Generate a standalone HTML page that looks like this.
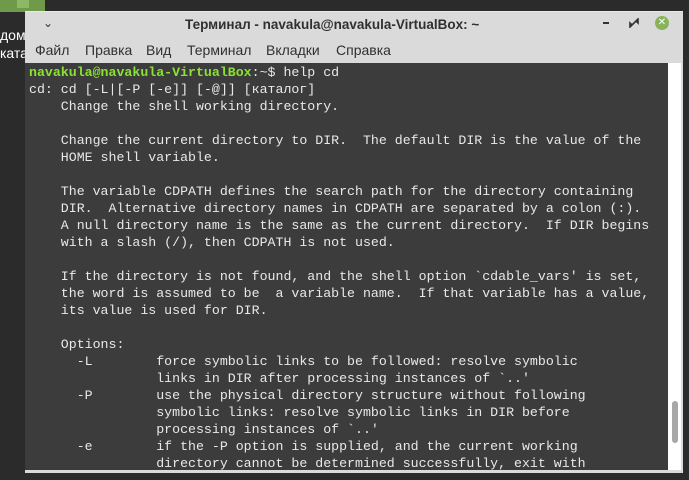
<!DOCTYPE html>
<html><head><meta charset="utf-8"><style>
html,body{margin:0;padding:0;}
body{width:689px;height:480px;overflow:hidden;background:#2b2b2b;position:relative;font-family:"Liberation Sans","DejaVu Sans",sans-serif;}
.icon{position:absolute;left:0;top:0;width:45px;height:12px;background:#6f9a4a;}
.icon2{position:absolute;left:17px;top:0;width:12px;height:8px;background:#8db866;}
.dl{position:absolute;left:0;color:#fff;font-size:14px;}
.win{position:absolute;left:25px;top:11px;width:658px;height:461px;background:#dadada;border-top:1px solid #e8e8e8;}
.title{position:absolute;top:0;left:160px;height:26px;white-space:nowrap;font-size:13.5px;line-height:26px;color:#303030;font-weight:bold;}
.menu{position:absolute;top:26px;left:0;height:24px;font-size:14px;line-height:24px;color:#303030;}
.menu span{position:absolute;top:0;white-space:nowrap;}
.term{position:absolute;top:51px;left:0;width:643px;height:407px;background:#3c3c3c;overflow:hidden;}
.sb{position:absolute;top:51px;left:643px;width:13px;height:407px;background:#fff;}
.thumb{position:absolute;left:4px;top:338px;width:6px;height:42px;border-radius:3px;background:#a8a8a8;}
pre{margin:0;padding:1px 0 0 4px;font-family:"Liberation Mono","DejaVu Sans Mono",monospace;font-size:13.25px;line-height:17px;color:#e8e8e8;}
.g{color:#8ae234;font-weight:bold;}
</style></head><body>
<div class="icon"></div><div class="icon2"></div>
<div class="dl" style="top:27px">дома</div>
<div class="dl" style="top:45px">ката</div>
<div class="win">
<div style="position:absolute;left:18px;top:4px;font-size:12px;color:#333">&#8964;</div>
<div class="title">Терминал - navakula@navakula-VirtualBox: ~</div>
<div style="position:absolute;left:578px;top:10px;width:6px;height:2px;background:#333"></div>
<svg style="position:absolute;left:604px;top:6px" width="10" height="10" viewBox="0 0 10 10"><path d="M1 9 L1 5 L3 7 Z M9 1 L9 5 L7 3 Z M2 8 L8 2" stroke="#333" stroke-width="1.6" fill="#333"/></svg>
<div style="position:absolute;left:630px;top:4px;width:14px;height:14px;border-radius:50%;background:#87b45a;color:#fff;font-size:10px;line-height:14px;text-align:center;font-weight:bold;">✕</div>
<div class="menu"><span style="left:10px">Файл</span><span style="left:60px">Правка</span><span style="left:121px">Вид</span><span style="left:162px">Терминал</span><span style="left:241px">Вкладки</span><span style="left:311px">Справка</span></div>
<div class="term"><pre><span class="g">navakula@navakula-VirtualBox</span>:~$ help cd
cd: cd [-L|[-P [-e]] [-@]] [каталог]
    Change the shell working directory.

    Change the current directory to DIR.  The default DIR is the value of the
    HOME shell variable.

    The variable CDPATH defines the search path for the directory containing
    DIR.  Alternative directory names in CDPATH are separated by a colon (:).
    A null directory name is the same as the current directory.  If DIR begins
    with a slash (/), then CDPATH is not used.

    If the directory is not found, and the shell option `cdable_vars' is set,
    the word is assumed to be  a variable name.  If that variable has a value,
    its value is used for DIR.

    Options:
      -L        force symbolic links to be followed: resolve symbolic
                links in DIR after processing instances of `..'
      -P        use the physical directory structure without following
                symbolic links: resolve symbolic links in DIR before
                processing instances of `..'
      -e        if the -P option is supplied, and the current working
                directory cannot be determined successfully, exit with</pre></div>
<div class="sb"><div class="thumb"></div></div>
</div>
</body></html>
